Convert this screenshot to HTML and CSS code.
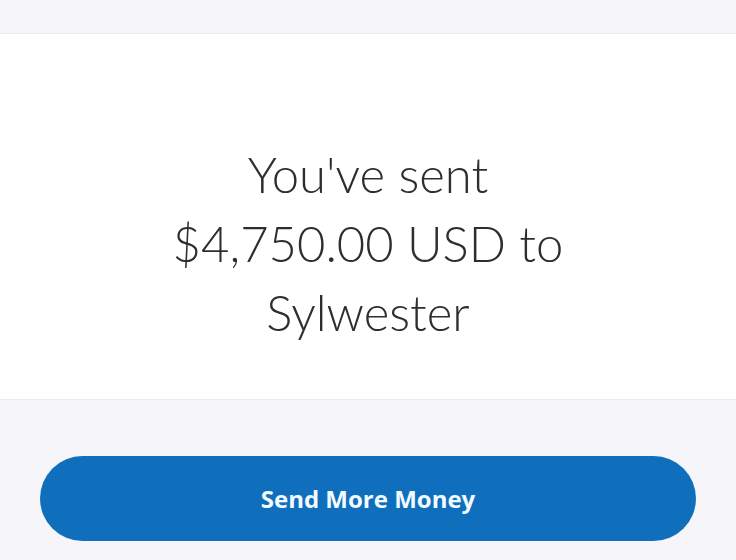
FILE: index.html
```html
<!DOCTYPE html>
<html>
<head>
<meta charset="utf-8">
<link rel="stylesheet" href="styles.css">
</head>
<body>
<div class="page">
  <section class="card">
    <h1 class="message">You've sent<br>$4,750.00 USD to<br>Sylwester</h1>
  </section>
  <div class="actions">
    <button class="primary">Send More Money</button>
  </div>
</div>
</body>
</html>
```
FILE: styles.css
```css
html, body {
  margin: 0;
  padding: 0;
  background: #f6f6fa;
}
.page {
  width: 736px;
  height: 560px;
  padding-top: 33px;
  box-sizing: border-box;
  display: flex;
  flex-direction: column;
}
.card {
  background: #ffffff;
  height: 367px;
  border-top: 1px solid #ebebed;
  border-bottom: 1px solid #ebebef;
  box-sizing: border-box;
  display: flex;
  align-items: flex-start;
  justify-content: center;
  padding-top: 106px;
}
.message {
  margin: 0;
  font-family: Lato, "Noto Sans", sans-serif;
  font-weight: 300;
  font-size: 49px;
  line-height: 69px;
  color: #2c2e2f;
  text-align: center;
}
.actions {
  padding: 56px 40px 0;
}
.primary {
  width: 100%;
  height: 85px;
  border: none;
  border-radius: 43px;
  background: #0f6fbd;
  color: #f2fbff;
  font-family: "Open Sans", sans-serif;
  font-weight: 700;
  font-size: 24px;
  cursor: pointer;
}
```
